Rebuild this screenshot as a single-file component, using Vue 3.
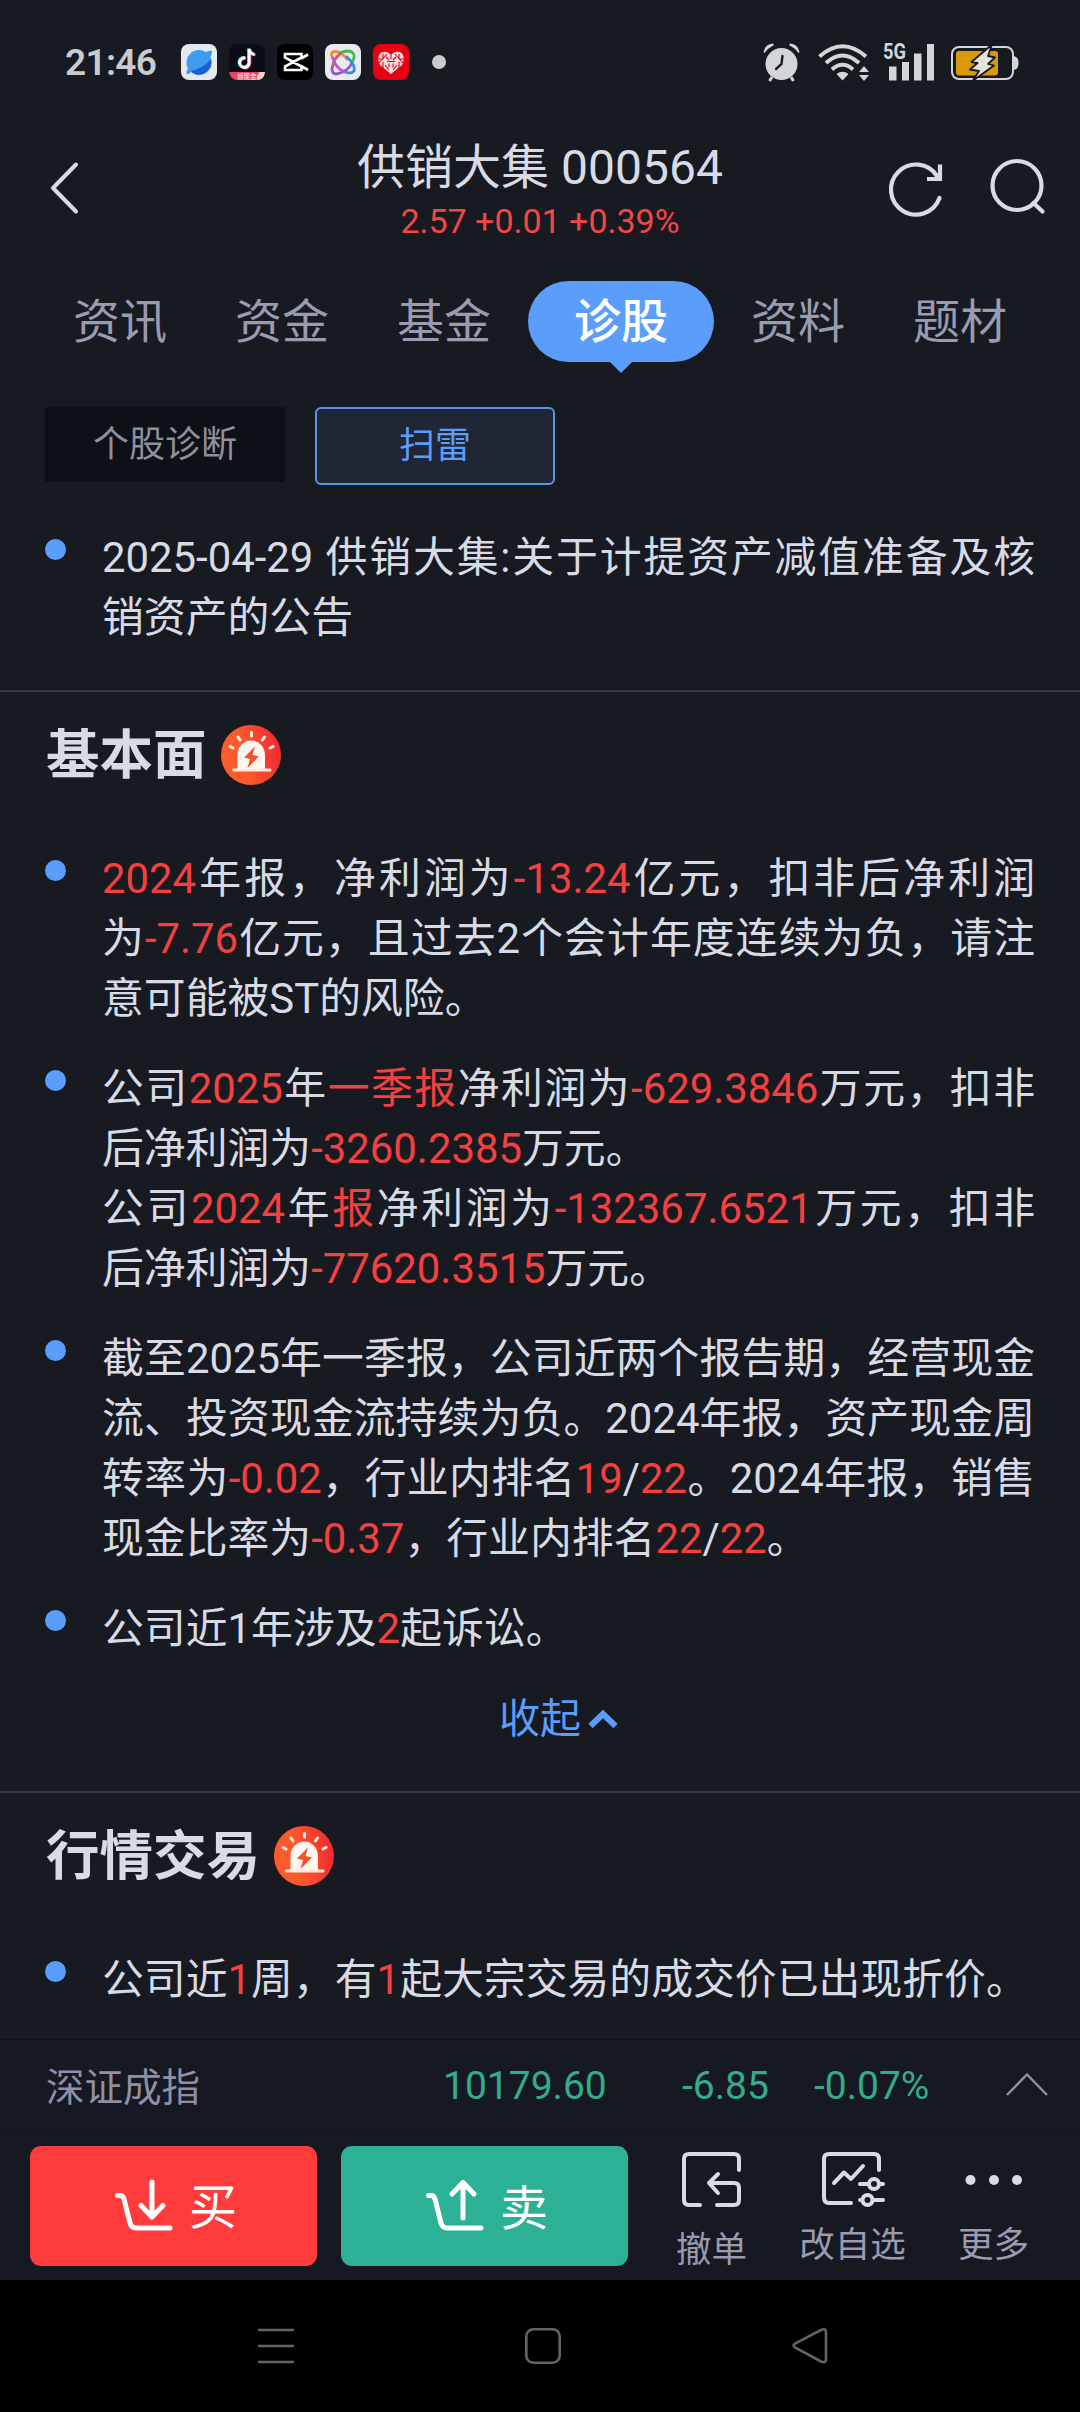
<script setup>
import { ref } from 'vue'

const tabs = ['资讯', '资金', '基金', '诊股', '资料', '题材']
const active_tab = ref('诊股')

const news = [
	[{ t: '2025-04-29 供销大集:关于计提资产减值准备及核销资产的公告' }]
]

// r: highlighted in red, br: starts on a new line
const basics = [
	[
		{ t: '2024', r: 1 }, { t: '年报，净利润为' }, { t: '-13.24', r: 1 }, { t: '亿元，扣非后净利润为' },
		{ t: '-7.76', r: 1 }, { t: '亿元，且过去2个会计年度连续为负，请注意可能被ST的风险。' }
	],
	[
		{ t: '公司' }, { t: '2025', r: 1 }, { t: '年' }, { t: '一季报', r: 1 }, { t: '净利润为' },
		{ t: '-629.3846', r: 1 }, { t: '万元，扣非后净利润为' }, { t: '-3260.2385', r: 1 }, { t: '万元。' },
		{ t: '公司', br: 1 }, { t: '2024', r: 1 }, { t: '年' }, { t: '报', r: 1 }, { t: '净利润为' },
		{ t: '-132367.6521', r: 1 }, { t: '万元，扣非后净利润为' }, { t: '-77620.3515', r: 1 }, { t: '万元。' }
	],
	[
		{ t: '截至2025年一季报，公司近两个报告期，经营现金流、投资现金流持续为负。2024年报，资产现金周转率为' },
		{ t: '-0.02', r: 1 }, { t: '，行业内排名' }, { t: '19', r: 1 }, { t: '/' }, { t: '22', r: 1 },
		{ t: '。2024年报，销售现金比率为' }, { t: '-0.37', r: 1 }, { t: '，行业内排名' },
		{ t: '22', r: 1 }, { t: '/' }, { t: '22', r: 1 }, { t: '。' }
	],
	[{ t: '公司近1年涉及' }, { t: '2', r: 1 }, { t: '起诉讼。' }]
]

const trades = [
	[{ t: '公司近' }, { t: '1', r: 1 }, { t: '周，有' }, { t: '1', r: 1 }, { t: '起大宗交易的成交价已出现折价。' }]
]

const sections = [
	{ title: '', items: news, more: false },
	{ title: '基本面', items: basics, more: true },
	{ title: '行情交易', items: trades, more: false }
]
</script>

<template>
	<div class="screen" lang="zh-CN">
		<div class="status-bar">
			<span class="clock">21:46</span>
			<div class="apps">
				<svg viewBox="0 0 36 36">
					<rect width="36" height="36" rx="8" fill="#e4e9f0" />
					<circle cx="18" cy="18.500" r="12.500" fill="#3d9cf0" />
					<path d="M30 15 A12.500 12.500 0 0 1 9 27 Q22 25 30 15z" fill="#1d5fd0" />
					<path d="M25 8 Q31 5 31 8 Q31 13 24 18 M11 27 Q5 33 5.500 28 L7 24" fill="#3d9cf0" />
				</svg>
				<svg viewBox="0 0 36 36">
					<rect width="36" height="36" rx="8" fill="#0c0c18" />
					<g fill="none" stroke-width="2.800">
						<path d="M15.500 13.500 a4.800 4.800 0 1 0 4 5 V4.500 q1 5 5.500 5.500" stroke="#25e5e5" />
						<path d="M17 14.500 a4.800 4.800 0 1 0 4 5 V5.500 q1 5 5.500 5.500" stroke="#f5305c" />
						<path d="M16.200 14 a4.800 4.800 0 1 0 4 5 V5 q1 5 5.500 5.500" stroke="#fff" />
					</g>
					<path d="M0 28 H36 Q35 36 28 36 H8 Q2 36 0 28z" fill="#e8455a" />
					<path d="M31 28 H36 Q35 36 28 36 Q27 31 31 28z" fill="#f4d3c4" />
					<text x="8" y="34.500" class="tiny">领现金</text>
				</svg>
				<svg viewBox="0 0 36 36">
					<rect width="36" height="36" rx="8" fill="#000" />
					<path d="M31 10.500 L24 14.500 M31 26 L24 22 M24.500 13 V10 H8 V13.500 L24.500 22.500 V26 H8 V22.500 L24.500 13.500" fill="none" stroke="#fff" stroke-width="2.600" />
				</svg>
				<svg viewBox="0 0 36 36">
					<rect width="36" height="36" rx="8" fill="#e9eaee" />
					<g fill="none" stroke-width="2.800" stroke-linecap="round">
						<path d="M8 15 Q4 8 10 7.500 Q15 7 22 15" stroke="#f08a2c" />
						<path d="M15 9 Q24 5 28 9 Q31 13 26 20" stroke="#4cb848" />
						<path d="M22 13 Q31 21 29 27 Q26 31 18 27" stroke="#2f8fe0" />
						<path d="M26 21 Q20 29 11 30 Q5 29 8 21" stroke="#8a5bd6" />
						<path d="M8 21 Q9 15 15 10" stroke="#e2506c" />
						<path d="M8 14 Q10 23 19 28" stroke="#b45bc8" />
					</g>
				</svg>
				<svg viewBox="0 0 36 36">
					<rect width="36" height="36" rx="8" fill="#e60012" />
					<path d="M18 30 L7 21 Q3 13 8 8.500 Q14 6 18 11 Q22 6 28 8.500 Q33 13 29 21z" fill="#f6dcdc" />
					<path d="M5 15 h5 v-5 M31 15 h-5 v-5 M10 18 v6 M26 18 v6 M6 19 L14 10 M30 19 L22 10 M13 13 l3 3 M23 13 l-3 3 M14 17.500 h8 M18 11 v4 M16 19.500 v4 M20 19.500 v4 M12 21 l4 5 M24 21 l-4 5" fill="none" stroke="#e60012" stroke-width="1.100" />
				</svg>
			</div>
			<i class="dot"></i>
			<div class="sys">
				<svg class="alarm" viewBox="0 0 37 38">
					<g fill="#d3d5d8">
						<circle cx="18.500" cy="21" r="16" />
						<path d="M0.500 9 Q2 1 10 0.500 L11 2 Q5 5 1.500 10z M36.500 9 Q35 1 27 0.500 L26 2 Q32 5 35.500 10z" />
					</g>
					<path d="M9 34 L6.500 38 M28 34 L30.500 38" stroke="#d3d5d8" stroke-width="3" />
					<path d="M19.500 13 L18.500 21 L13 26" fill="none" stroke="#171a21" stroke-width="2.400" stroke-linecap="round" />
				</svg>
				<svg class="wifi" viewBox="0 0 51 37">
					<g fill="none" stroke="#d3d5d8" stroke-width="4">
						<path d="M1.500 12.500 Q24.500 -8 48 12.500" />
						<path d="M8 19 Q24.500 4 41 19" />
						<path d="M14 25.500 Q24.500 16 35 25.500" />
					</g>
					<path d="M18.500 30 Q24.500 25.500 30.500 30 L24.500 36.500z M41 28 L46 22 L51 28z M41 31 L46 37 L51 31z" fill="#d3d5d8" />
				</svg>
				<svg class="signal" viewBox="0 0 52 38">
					<text x="0" y="15.500" class="net" textLength="23" lengthAdjust="spacingAndGlyphs">5G</text>
					<path d="M6 23.500h7.500V37.500H6z M19 19h7V37.500h-7z M31 10.500h7.500V37.500H31z M44 1h7V37.500h-7z" fill="#d3d5d8" />
				</svg>
				<svg class="battery" viewBox="0 0 68 38">
					<rect x="1" y="4" width="61" height="32" rx="7" fill="none" stroke="#d3d5d8" stroke-width="2" />
					<path d="M63 13 Q67.500 14 67.500 20 Q67.500 26 63 27z" fill="#d3d5d8" />
					<rect x="5" y="8" width="42" height="24.500" rx="3" fill="#d99a0a" />
					<path d="M41 1.500 L20.500 19 L26.500 20 L19 26.500 L28 28 L21.500 38 L43 22.500 L37 21 L44 14.500 L37 13z" fill="#e6e3de" stroke="#171a21" stroke-width="1.800" stroke-linejoin="round" />
				</svg>
			</div>
		</div>

		<div class="header">
			<svg class="back" viewBox="0 0 30 54">
				<path d="M27 3.500 L4 27 L27 50.500" fill="none" stroke="#d8dbe5" stroke-width="4" stroke-linecap="round" stroke-linejoin="round" />
			</svg>
			<div class="stock">
				<h1>供销大集 000564</h1>
				<p>2.57 +0.01 +0.39%</p>
			</div>
			<div class="actions">
				<svg class="refresh" viewBox="0 0 56 56">
					<g fill="none" stroke="#d8dbe5" stroke-width="4.200">
						<path d="M52.500 38 A25 25 0 1 1 50 16" stroke-linecap="round" />
						<path d="M53 4.500 V19 H40" />
					</g>
				</svg>
				<svg class="search" viewBox="0 0 56 56">
					<circle cx="27" cy="27.500" r="24.500" fill="none" stroke="#d8dbe5" stroke-width="4.200" />
					<path d="M43.500 45 L52.500 53.500" stroke="#d8dbe5" stroke-width="4.200" stroke-linecap="round" />
				</svg>
			</div>
		</div>

		<div class="tabs">
			<div v-for="tab in tabs" :key="tab" class="tab" :class="{ active: tab == active_tab }" @click="active_tab = tab">
				<span>{{ tab }}</span>
			</div>
		</div>

		<div class="sub-tabs">
			<div class="sub">个股诊断</div>
			<div class="sub on">扫雷</div>
		</div>

		<div v-for="(section, i) in sections" :key="i" class="section" :class="{ first: !section.title }">
			<h2 v-if="section.title">
				<span>{{ section.title }}</span>
				<svg viewBox="0 0 60 60">
					<defs>
						<linearGradient :id="'siren' + i" x1="0" y1="0.600" x2="1" y2="0.400">
							<stop offset="0.350" stop-color="#ff5a2c" />
							<stop offset="1" stop-color="#f02a32" />
						</linearGradient>
					</defs>
					<circle cx="30" cy="30" r="30" :fill="'url(#siren' + i + ')'" />
					<path d="M16.500 44 V30 A13.700 14.500 0 0 1 44 30 V44z" fill="#fff6f0" />
					<path d="M12.500 45 H49" stroke="#ffe9e0" stroke-width="3" stroke-linecap="round" />
					<path d="M30.500 7.500 V11 M17 12 L19 15 M43.500 12 L41.500 15 M9 21.500 L12 23 M52 21.500 L49 23" stroke="#fff1e8" stroke-width="3" stroke-linecap="round" />
					<path d="M34 21.500 L23 32.500 L29 34 L26.500 43 L38 31.500 L31.500 30z" fill="#f4522e" />
				</svg>
			</h2>
			<ul>
				<li v-for="(item, n) in section.items" :key="n">
					<p><template v-for="(part, k) in item" :key="k"><br v-if="part.br"><span :class="{ red: part.r }">{{ part.t }}</span></template></p>
				</li>
			</ul>
			<div v-if="section.more" class="more">
				<span>收起</span>
				<svg viewBox="0 0 30 20">
					<path d="M2.500 17 L15 5 L27.500 17" fill="none" stroke="#5a9dfa" stroke-width="6" />
				</svg>
			</div>
		</div>

		<div class="bottom">
			<div class="index-row">
				<span class="name">深证成指</span>
				<span class="price">10179.60</span>
				<span class="change">-6.85</span>
				<span class="percent">-0.07%</span>
				<svg viewBox="0 0 42 24">
					<path d="M1 23 L21 2.500 L41 23" fill="none" stroke="#8f919b" stroke-width="2.400" />
				</svg>
			</div>
			<div class="trade-row">
				<button class="buy">
					<svg viewBox="0 0 58 54">
						<path d="M2.500 16.500 H5 Q8 16.500 9 20 L15 44 Q16.500 49 21 49 H55 M37 3 V37 M26 26.500 L37 38 L48 26.500" />
					</svg>
					<span>买</span>
				</button>
				<button class="sell">
					<svg viewBox="0 0 58 54">
						<path d="M2.500 16.500 H5 Q8 16.500 9 20 L15 44 Q16.500 49 21 49 H55 M37 39 V4 M26 15 L37 3.500 L48 15" />
					</svg>
					<span>卖</span>
				</button>
				<div class="tool cancel">
					<svg viewBox="0 0 66 60">
						<path d="M60 20 V9 Q60 4 55 4 H10 Q5 4 5 9 V50 Q5 55 10 55 H21 M38 55 H55 Q60 55 60 50 V38 Q60 33 55 33 H31 M39 24 L30 33 L39 43" />
					</svg>
					<span>撤单</span>
				</div>
				<div class="tool edit">
					<svg viewBox="0 0 66 60">
						<path d="M59 20 V9 Q59 4 54 4 H9 Q4 4 4 9 V47 Q4 53 9 53 H31 M14 33 L24 22.500 L31 29 L43 16 M40 34 H48 M60 34 H63 M40 50 H42 M53 50 H63" />
						<circle cx="54" cy="34" r="5" />
						<circle cx="47.500" cy="50" r="5" />
					</svg>
					<span>改自选</span>
				</div>
				<div class="tool dots">
					<svg viewBox="0 0 66 60">
						<g class="fill">
							<circle cx="9.500" cy="30" r="5" />
							<circle cx="33" cy="30" r="5" />
							<circle cx="56" cy="30" r="5" />
						</g>
					</svg>
					<span>更多</span>
				</div>
			</div>
		</div>

		<div class="nav-bar">
			<svg viewBox="0 0 36 36"><path d="M0 2 H36 M0 18 H36 M0 34 H36" /></svg>
			<svg viewBox="0 0 36 36"><rect x="1.300" y="1.300" width="33.400" height="33.400" rx="7" /></svg>
			<svg viewBox="0 0 36 36"><path d="M29 2 L3 15.500 Q0 17.500 3 19.500 L29 33.500 Q34 35.500 34 31 V4 Q34 0 29 2z" /></svg>
		</div>
	</div>
</template>

<style>
body {
	background-color: #171a21;
}
</style>

<style scoped>
.screen {
	width: 1080px;
	height: 2412px;
	overflow: hidden;
	display: flex;
	flex-direction: column;
	background-color: #171a21;
	color: #d8dbe5;
	font-family: Roboto, "Noto Sans CJK SC", sans-serif;
}
svg {
	display: block;
	flex: none;
	overflow: visible;
}
h1, h2, p, ul {
	margin: 0;
	padding: 0;
	font-weight: 400;
}
.status-bar {
	height: 124px;
	flex: none;
	display: flex;
	align-items: center;
	padding: 0 61px 0 65px;
	box-sizing: border-box;
}
.clock {
	width: 116px;
	font-size: 37px;
	font-weight: 600;
	letter-spacing: -0.7px;
	color: #c9cbd1;
}
.apps {
	display: flex;
	gap: 12px;
}
.apps svg {
	width: 36px;
	height: 36px;
}
.tiny {
	font-size: 6.5px;
	fill: #fff;
}
.dot {
	width: 14px;
	height: 14px;
	border-radius: 50%;
	background-color: #c9cbcf;
	margin-left: 23px;
}
.sys {
	display: flex;
	align-items: center;
	margin-left: auto;
}
.alarm {
	width: 37px;
	height: 38px;
}
.wifi {
	width: 51px;
	height: 37px;
	margin-left: 18px;
}
.signal {
	width: 52px;
	height: 38px;
	margin-left: 14px;
}
.net {
	font-size: 21.5px;
	font-weight: 700;
	fill: #d3d5d8;
}
.battery {
	width: 68px;
	height: 38px;
	margin-left: 16px;
}
.header {
	height: 157px;
	flex: none;
	display: grid;
	grid-template-columns: 1fr auto 1fr;
	padding: 0 34px 0 49px;
}
.back {
	width: 30px;
	height: 54px;
	margin-top: 37px;
}
.stock {
	text-align: center;
	margin-right: 15px;
}
h1 {
	font-size: 48px;
	line-height: 64px;
	margin-top: 12px;
	white-space: nowrap;
}
.stock p {
	font-size: 34px;
	line-height: 42px;
	color: #f54545;
}
.actions {
	display: flex;
	justify-content: flex-end;
	gap: 47px;
	padding-top: 34px;
}
.refresh {
	width: 56px;
	height: 56px;
	margin-top: 2px;
}
.search {
	width: 56px;
	height: 56px;
}
.tabs {
	display: flex;
	padding-left: 39px;
	height: 126px;
	flex: none;
	font-size: 47px;
	color: #9a9ab0;
}
.tab {
	width: 162px;
	height: 81px;
	line-height: 82px;
	text-align: center;
	position: relative;
}
.tab.active {
	width: 192px;
	color: #fff;
	font-weight: 500;
}
.tab.active span {
	display: block;
	height: 81px;
	margin: 0 3px;
	border-radius: 41px;
	background-color: #5a9dfa;
}
.tab.active::after {
	content: "";
	position: absolute;
	left: 84px;
	top: 80px;
	border: 12px solid transparent;
	border-top-color: #5a9dfa;
	border-bottom: 0;
}
.sub-tabs {
	display: flex;
	align-items: flex-start;
	gap: 30px;
	padding-left: 45px;
	height: 120px;
	flex: none;
}
.sub {
	width: 240px;
	height: 75px;
	line-height: 76px;
	box-sizing: border-box;
	text-align: center;
	font-size: 36px;
	color: #8e909b;
	background-color: #0d1017;
}
.sub.on {
	height: 78px;
	line-height: 75px;
	color: #5a9dfa;
	background-color: #212634;
	border: 2px solid #5a94e6;
	border-radius: 6px;
}
.section {
	flex: none;
	border-top: 2px solid #353940;
}
.section.first {
	border-top: 0;
	height: 163px;
}
h2 {
	display: flex;
	align-items: center;
	gap: 14px;
	height: 126px;
	padding-left: 46px;
	font-size: 53.5px;
	font-weight: 700;
}
h2 span {
	line-height: 80px;
	margin-top: 2px;
}
h2 svg {
	width: 60px;
	height: 60px;
}
ul {
	list-style: none;
	padding: 30px 45px 0 45px;
}
.first ul {
	padding-top: 0;
}
li {
	display: flex;
	margin-bottom: 30px;
}
li::before {
	content: "";
	width: 21px;
	height: 21px;
	flex: none;
	border-radius: 50%;
	background-color: #5a9dfa;
	margin: 12px 36px 0 0;
}
li p {
	flex: 1;
	font-size: 41.85px;
	line-height: 60px;
	text-align: justify;
	position: relative;
	top: 1px;
}
.red {
	color: #f54040;
}
.more {
	display: flex;
	align-items: center;
	justify-content: center;
	gap: 7px;
	height: 54px;
	margin: 0 0 49px 37px;
	font-size: 41px;
	color: #5a9dfa;
}
.more svg {
	width: 30px;
	height: 20px;
	margin-top: 8px;
}
.bottom {
	margin-top: auto;
	flex: none;
	height: 241px;
	background-color: #171922;
	border-top: 1px solid #10131a;
	box-sizing: border-box;
}
.index-row {
	display: grid;
	grid-template-columns: 397px 239px 132px 192px 42px;
	align-items: center;
	height: 93px;
	padding-left: 46px;
	box-sizing: border-box;
	border-bottom: 1px solid #10131a;
	font-size: 39px;
	color: #35ab8e;
}
.index-row .name {
	font-size: 38.5px;
	margin-top: -5px;
	color: #8f90a6;
}
.index-row svg {
	width: 42px;
	height: 24px;
	margin-top: -4px;
}
.trade-row {
	display: flex;
	padding: 13px 0 0 30px;
}
button {
	display: flex;
	align-items: center;
	width: 287px;
	height: 120px;
	padding: 0 0 0 85px;
	gap: 16px;
	border: 0;
	border-radius: 11px;
	color: #fff;
	font-size: 48px;
	font-family: inherit;
}
button span {
	margin-top: -6px;
}
button svg {
	width: 58px;
	height: 54px;
}
button path {
	fill: none;
	stroke: #fff;
	stroke-width: 5;
	stroke-linecap: round;
	stroke-linejoin: round;
}
.buy {
	background-color: #ff3b3b;
}
.sell {
	background-color: #2cb096;
	margin-left: 24px;
}
.sell span {
	margin-top: -4px;
}
.tool {
	display: flex;
	flex-direction: column;
	align-items: center;
	font-size: 35.5px;
	line-height: 44px;
	color: #9a9ab0;
}
.tool svg {
	width: 66px;
	height: 60px;
	margin-top: 4px;
	fill: none;
	stroke: #d8dbe5;
	stroke-width: 4;
	stroke-linecap: round;
	stroke-linejoin: round;
}
.tool .fill {
	fill: #d8dbe5;
	stroke: none;
}
.tool span {
	margin-top: 13px;
}
.cancel {
	width: 71px;
	margin-left: 48px;
}
.cancel span {
	margin-top: 18px;
}
.edit {
	width: 107px;
	margin-left: 52px;
}
.dots {
	width: 71px;
	margin-left: 52px;
}
.nav-bar {
	flex: none;
	height: 132px;
	background-color: #000;
	display: flex;
	padding-left: 258px;
	gap: 231px;
	align-items: center;
}
.nav-bar svg {
	width: 36px;
	height: 36px;
	fill: none;
	stroke: #646464;
	stroke-width: 2.6;
}
</style>
